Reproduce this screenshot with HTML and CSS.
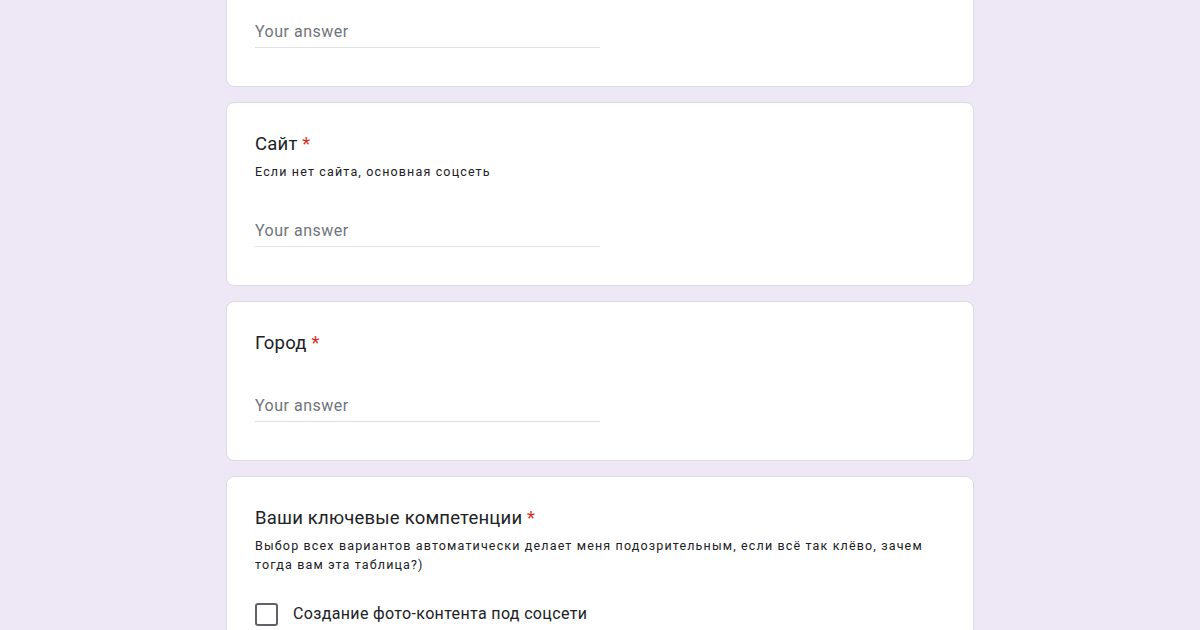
FILE: index.html
```html
<!DOCTYPE html>
<html lang="ru">
<head>
<meta charset="utf-8">
<link rel="stylesheet" href="styles.css">
</head>
<body>
<div class="form">
  <div class="card card-first">
    <div class="answer"><span class="placeholder">Your answer</span></div>
  </div>
  <div class="card">
    <div class="title">Сайт <span class="req">*</span></div>
    <div class="desc">Если нет сайта, основная соцсеть</div>
    <div class="answer"><span class="placeholder">Your answer</span></div>
  </div>
  <div class="card">
    <div class="title">Город <span class="req">*</span></div>
    <div class="answer"><span class="placeholder">Your answer</span></div>
  </div>
  <div class="card">
    <div class="title">Ваши ключевые компетенции <span class="req">*</span></div>
    <div class="desc">Выбор всех вариантов автоматически делает меня подозрительным, если всё так клёво, зачем тогда вам эта таблица?)</div>
    <div class="options">
      <div class="option"><span class="checkbox"></span><span class="opt-label">Создание фото-контента под соцсети</span></div>
      <div class="option"><span class="checkbox"></span><span class="opt-label">Съёмка видео</span></div>
    </div>
  </div>
</div>
</body>
</html>
```
FILE: styles.css
```css
html, body {
  margin: 0;
  padding: 0;
  background: #ede7f6;
  height: 630px;
  overflow: hidden;
  font-family: Roboto, "Liberation Sans", sans-serif;
  color: #202124;
}
.form {
  width: 748px;
  margin: 0 auto;
  display: flex;
  flex-direction: column;
  gap: 15px;
}
.card {
  background: #fff;
  border: 1px solid #dadce0;
  border-radius: 8px;
  padding: 28px 28px 38px 28px;
}
.card-first {
  margin-top: -40px;
  padding-top: 59px;
  border-top-left-radius: 0;
  border-top-right-radius: 0;
}
.title {
  font-size: 18.5px;
  line-height: 26px;
  letter-spacing: 0.2px;
}
.req {
  color: #d93025;
}
.desc {
  font-size: 12.5px;
  line-height: 19px;
  margin-top: 5px;
  letter-spacing: 1.15px;
}
.answer {
  width: 50%;
  margin-top: 38px;
  height: 24px;
  padding-bottom: 3px;
  border-bottom: 1px solid #e0e0e0;
  box-sizing: content-box;
}
.card-first .answer {
  margin-top: 0;
}
.placeholder {
  font-size: 16px;
  line-height: 24px;
  color: #70757a;
  letter-spacing: 0.5px;
}
.options {
  margin-top: 28px;
  display: flex;
  flex-direction: column;
  gap: 20px;
}
.option {
  display: flex;
  align-items: center;
  gap: 15px;
}
.checkbox {
  width: 19px;
  height: 19px;
  border: 2px solid #5f6368;
  border-radius: 3px;
  flex: none;
}
.opt-label {
  font-size: 16px;
  line-height: 24px;
  letter-spacing: 0.35px;
}
```
